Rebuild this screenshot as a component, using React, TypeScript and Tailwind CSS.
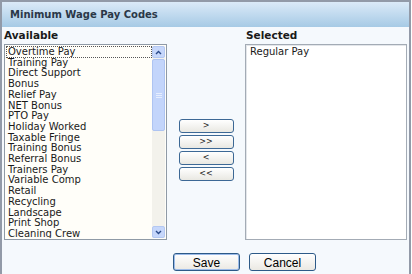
import React from 'react';

const available = [
  'Overtime Pay',
  'Training Pay',
  'Direct Support',
  'Bonus',
  'Relief Pay',
  'NET Bonus',
  'PTO Pay',
  'Holiday Worked',
  'Taxable Fringe',
  'Training Bonus',
  'Referral Bonus',
  'Trainers Pay',
  'Variable Comp',
  'Retail',
  'Recycling',
  'Landscape',
  'Print Shop',
  'Cleaning Crew',
];

function Chevron({ up }: { up?: boolean }) {
  return (
    <svg width="7" height="5" viewBox="0 0 7 5">
      <path d={up ? 'M1 4 L3.5 1.5 L6 4' : 'M1 1 L3.5 3.5 L6 1'} fill="none" stroke="#2a4a8a" strokeWidth="1.4" />
    </svg>
  );
}

function ScrollBar() {
  return (
    <div className="flex h-full w-[13px] flex-col bg-[#f3f2ec]">
      <div className="flex h-[12px] items-center justify-center rounded-[2px] border border-[#b4c8f2] bg-[#c6d7fb]">
        <Chevron up />
      </div>
      <div className="mt-[1px] flex h-[72px] items-center justify-center rounded-[2px] border border-[#aec4f2] bg-[#c3d5fb]">
        <div className="flex flex-col gap-[1px]">
          <div className="h-px w-[6px] bg-[#e6eefe]" />
          <div className="h-px w-[6px] bg-[#e6eefe]" />
          <div className="h-px w-[6px] bg-[#e6eefe]" />
        </div>
      </div>
      <div className="flex-1" />
      <div className="flex h-[12px] items-center justify-center rounded-[2px] border border-[#b4c8f2] bg-[#c6d7fb]">
        <Chevron />
      </div>
    </div>
  );
}

function MoveButton({ label }: { label: string }) {
  return (
    <button className="flex h-[14px] w-[55px] items-center justify-center rounded-[3px] border border-[#3c6895] bg-gradient-to-b from-[#ffffff] to-[#e9e8e2] text-[8px] leading-none text-[#222]">
      {label}
    </button>
  );
}

export default function App() {
  return (
    <div className="h-[274px] w-[411px] border-x-2 border-t-2 border-[#929aa8] bg-[#f5f9fd] font-['DejaVu_Sans',Verdana,sans-serif] text-[#1a1a1a]">
      <div className="flex h-[25px] items-center bg-gradient-to-b from-[#dbeaf8] to-[#a6cae5] pl-[8px] text-[10px] font-bold text-[#2b3848]">
        Minimum Wage Pay Codes
      </div>
      <div className="flex pl-[2px] pr-[2px]">
        <div className="w-[163px]">
          <div className="flex h-[17px] items-center text-[10.5px] font-bold">Available</div>
          <div className="flex h-[196px] border border-[#8f9aa6] bg-[#fffef9] p-px">
            <div className="flex-1 overflow-hidden text-[10px] leading-[10.7px]">
              {available.map((item, i) => (
                <div
                  key={item}
                  className={
                    i === 0
                      ? 'border border-dotted border-[#555] pl-[1px] leading-[9.7px]'
                      : 'pl-[2px]'
                  }
                >
                  {item}
                </div>
              ))}
            </div>
            <ScrollBar />
          </div>
        </div>
        <div className="flex flex-1 flex-col items-center gap-[2px] pt-[92px]">
          <MoveButton label=">" />
          <MoveButton label=">>" />
          <MoveButton label="<" />
          <MoveButton label="<<" />
        </div>
        <div className="w-[162px]">
          <div className="flex h-[17px] items-center pl-[1px] text-[10.5px] font-bold">Selected</div>
          <div className="h-[196px] border border-[#a3abb5] bg-white px-[4px] py-[1px] text-[10px] leading-[11px] shadow-[inset_1px_1px_0_#e3e6ea]">
            Regular Pay
          </div>
        </div>
      </div>
      <div className="flex gap-[9px] pl-[171px] pt-[13px] font-['Liberation_Sans',Arial,sans-serif] text-[12px] text-black">
        <button className="h-[18px] w-[67px] rounded-[3px] border border-[#2d5a88] bg-gradient-to-b from-[#ffffff] to-[#ebe9e3] shadow-[inset_0_0_0_1px_#9cbbe9]">
          Save
        </button>
        <button className="h-[18px] w-[67px] rounded-[3px] border border-[#2d5a88] bg-gradient-to-b from-[#ffffff] to-[#ebe9e3]">
          Cancel
        </button>
      </div>
    </div>
  );
}
